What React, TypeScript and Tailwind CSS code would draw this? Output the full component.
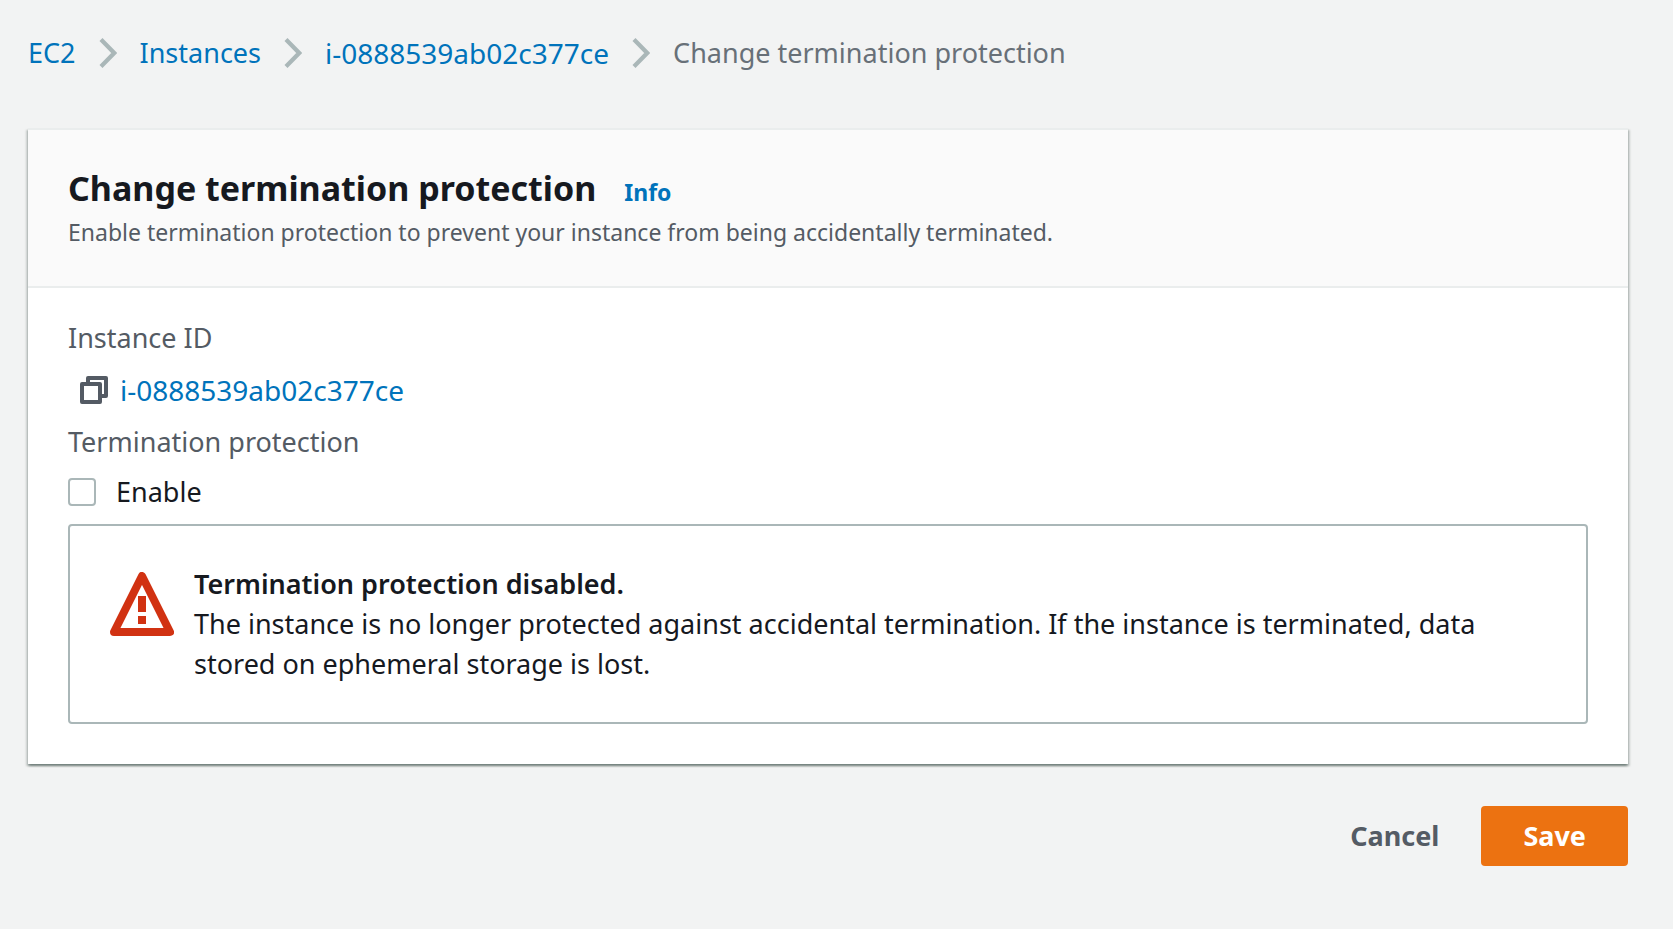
import { useState } from "react";

const INSTANCE_ID = "i-0888539ab02c377ce";

function Chevron() {
  return (
    <svg width="18" height="32" viewBox="0 0 18 32" fill="none" stroke="#aab7b8" strokeWidth="4.2" aria-hidden="true">
      <path d="M2 2.5 15.2 16 2 29.5" />
    </svg>
  );
}

function CopyIcon() {
  return (
    <svg width="28" height="28" viewBox="0 0 28 28" fill="none" stroke="#545b64" strokeWidth="4" strokeLinejoin="round" aria-hidden="true">
      <path d="M2 8h18v18H2z" />
      <path d="M8 8V2h18v18h-6" />
    </svg>
  );
}

function WarningIcon() {
  return (
    <svg className="shrink-0" width="64" height="64" viewBox="0 0 64 64" fill="none" stroke="#d13212" strokeWidth="8" aria-hidden="true">
      <path d="M32 4 60 60H4z" strokeLinejoin="round" />
      <path d="M32 24v16M32 44v8" />
    </svg>
  );
}

function Breadcrumbs() {
  const links = ["EC2", "Instances"];
  return (
    <nav aria-label="Breadcrumbs">
      <ol className="flex flex-wrap items-center gap-x-[23px] text-[27px] leading-10">
        {links.map((label) => (
          <li key={label} className="flex items-center gap-[23px]">
            <a href="#" className="text-[#0073bb] hover:underline">{label}</a>
            <Chevron />
          </li>
        ))}
        <li className="flex items-center gap-[23px]">
          <a href="#" className="text-[28px] text-[#0073bb] hover:underline">{INSTANCE_ID}</a>
          <Chevron />
        </li>
        <li className="text-[#687078]" aria-current="page">Change termination protection</li>
      </ol>
    </nav>
  );
}

export default function App() {
  const [enabled, setEnabled] = useState(false);

  return (
    <div className="min-h-screen bg-[#f2f3f3] pt-[33px] pr-[45px] pb-16 pl-7 font-['Noto_Sans','Open_Sans',sans-serif] text-[#16191f]">
      <Breadcrumbs />
      <main className="pt-[55px]">
        <section className="border-t-2 border-[#eaeded] bg-white shadow-[0_2px_2px_0_rgba(0,28,20,0.35),2px_2px_2px_0_rgba(0,28,20,0.15),-2px_2px_2px_0_rgba(0,28,20,0.15)]">
          <header className="border-b-2 border-[#eaeded] bg-[#fafafa] px-10 pt-8 pb-9">
            <div className="flex items-baseline gap-7">
              <h1 className="text-[34px] leading-[52px] font-bold">Change termination protection</h1>
              <a href="#" className="text-[23px] font-bold text-[#0073bb] hover:underline">Info</a>
            </div>
            <p className="text-[23px] leading-9 text-[#545b64]">
              Enable termination protection to prevent your instance from being accidentally terminated.
            </p>
          </header>
          <div className="px-10 pt-[30px] pb-10 text-[27px] leading-10">
            <h2 className="text-[#545b64]">Instance ID</h2>
            <div className="flex items-center gap-3 py-3 pl-3">
              <button type="button" aria-label="Copy instance ID">
                <CopyIcon />
              </button>
              <a href="#" className="text-[28px] text-[#0073bb] hover:underline">{INSTANCE_ID}</a>
            </div>
            <h2 className="text-[#545b64]">Termination protection</h2>
            <label className="flex w-fit items-center gap-5 pt-[10px] pb-3">
              <input
                type="checkbox"
                checked={enabled}
                onChange={(event) => setEnabled(event.target.checked)}
                className="size-7 appearance-none rounded-[4px] border-2 border-[#aab7b8] bg-white checked:border-[#0073bb] checked:bg-[#0073bb]"
              />
              Enable
            </label>
            <div className="flex gap-5 rounded-[4px] border-2 border-[#aab7b8] px-10 py-[38px]">
              <div className="pt-2">
                <WarningIcon />
              </div>
              <div>
                <strong className="block font-semibold">Termination protection disabled.</strong>
                <p>
                  The instance is no longer protected against accidental termination. If the instance is terminated, data
                  stored on ephemeral storage is lost.
                </p>
              </div>
            </div>
          </div>
        </section>
        <div className="flex justify-end pt-[42px] text-[27px] leading-10 font-bold">
          <button type="button" className="px-[42px] py-[10px] text-[#545b64]">Cancel</button>
          <button type="button" className="rounded-[4px] bg-[#ec7211] px-[42px] py-[10px] text-white">Save</button>
        </div>
      </main>
    </div>
  );
}
